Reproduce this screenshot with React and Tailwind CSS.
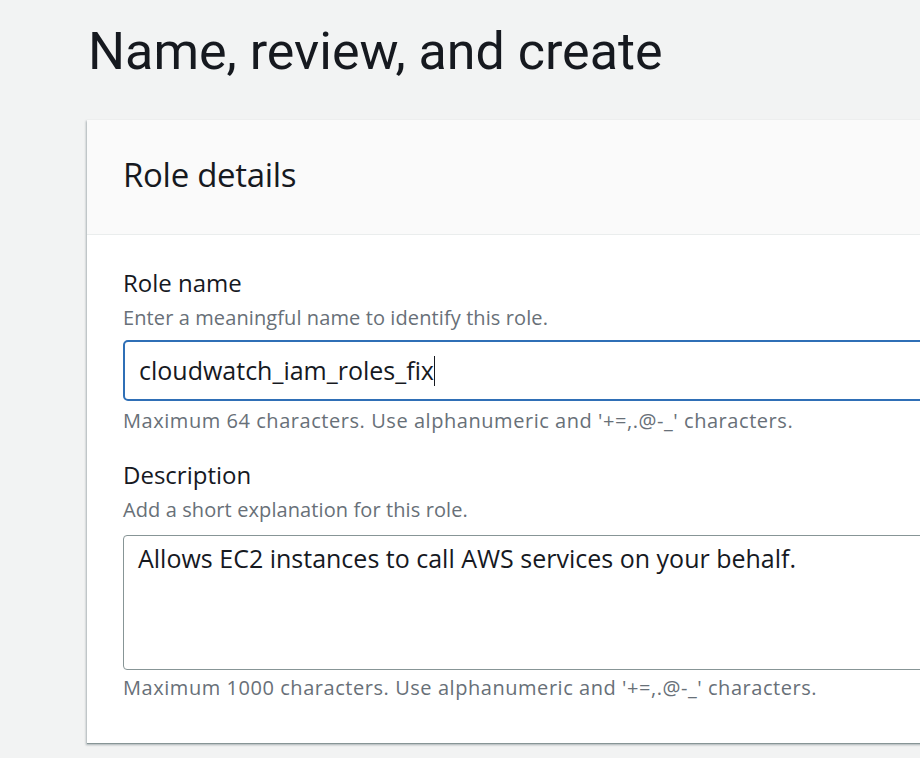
export default function App() {
  return (
    <main className="min-h-[758px] bg-[#f2f3f3] pl-[87px] pt-[22px] overflow-hidden font-['Open_Sans',sans-serif] text-[#16191f]">
      {/* Page title */}
      <h1 className="font-['Roboto',sans-serif] text-[52px] leading-[60px] pl-[1px] h-[98px]">
        Name, review, and create
      </h1>

      {/* Role details card */}
      <section className="w-[900px] bg-white border-b border-[#879596] shadow-[-1px_1px_2px_rgba(0,28,36,0.3)]">
        <div className="h-[115px] bg-[#fafafa] border-b border-[#eaeded] pl-[36px] flex items-center">
          <h2 className="text-[33px] pb-[4px] tracking-[-0.3px]">Role details</h2>
        </div>

        <div className="pl-[36px] pt-[33px] pb-[41px]">
          <label className="block text-[24px] leading-[30px]">Role name</label>
          <p className="text-[20px] leading-[28px] text-[#687078] mt-[6px] tracking-[0.1px]">Enter a meaningful name to identify this role.</p>
          <div className="mt-[8px] h-[61px] border-2 border-[#2f6fb6] rounded-[5px] pl-[14px] flex items-center">
            <span className="text-[25px]">cloudwatch_iam_roles_fix</span>
            <span className="w-[1.5px] h-[30px] bg-[#16191f]"></span>
          </div>
          <p className="mt-[6px] text-[20px] leading-[28px] text-[#687078] tracking-[0.55px]">
            Maximum 64 characters. Use alphanumeric and '+=,.@-_' characters.
          </p>

          <label className="block mt-[25px] text-[24px] leading-[30px]">Description</label>
          <p className="text-[20px] leading-[28px] text-[#687078] mt-[6px] tracking-[0.1px]">Add a short explanation for this role.</p>
          <div className="mt-[11px] h-[135px] border border-[#879596] rounded-[4px] pl-[14px] pt-[5px]">
            <span className="text-[25px] leading-[34px]">Allows EC2 instances to call AWS services on your behalf.</span>
          </div>
          <p className="mt-[4px] text-[20px] leading-[28px] text-[#687078] tracking-[0.55px]">
            Maximum 1000 characters. Use alphanumeric and '+=,.@-_' characters.
          </p>
        </div>
      </section>
    </main>
  )
}
